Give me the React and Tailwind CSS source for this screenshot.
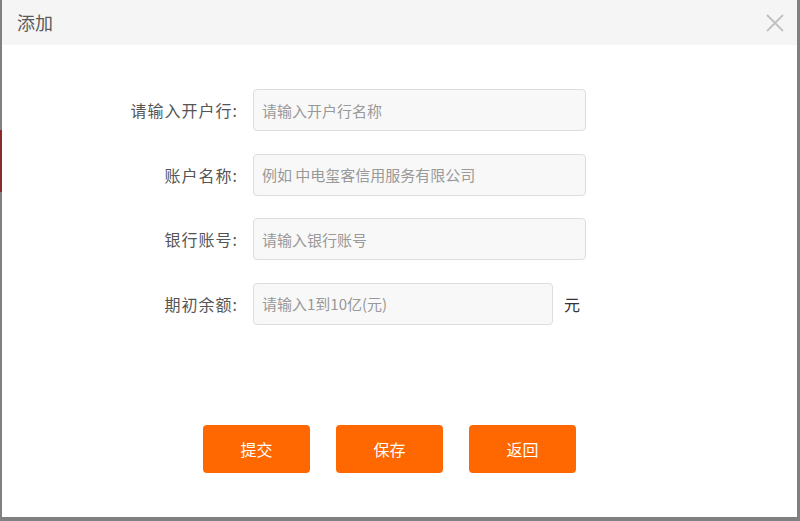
import React from "react";

const fields = [
  { label: "请输入开户行:", placeholder: "请输入开户行名称" },
  { label: "账户名称:", placeholder: "例如 中电玺客信用服务有限公司" },
  { label: "银行账号:", placeholder: "请输入银行账号" },
];

const App = () => {
  return (
    <div
      className="flex h-[521px] w-[800px] flex-col overflow-hidden bg-[#808080]"
      style={{ fontFamily: '"Noto Sans CJK SC", "Liberation Sans", sans-serif' }}
    >
      <div className="flex h-[517px]">
        {/* backdrop edge */}
        <div className="flex w-[2px] flex-col">
          <div className="h-[130px]" />
          <div className="h-[62px] bg-[#8b2a2a]" />
        </div>

        {/* dialog */}
        <div className="flex w-[795px] flex-col bg-white">
          <div className="flex h-[45px] items-center justify-between bg-[#f5f5f5] pl-[15px] pr-[12px]">
            <span className="text-[18px] text-[#5a5a5a]">添加</span>
            <svg width="20" height="20" viewBox="0 0 20 20" className="text-[#c0c0c0]">
              <path d="M2 2 L18 18 M18 2 L2 18" stroke="currentColor" strokeWidth="1.8" />
            </svg>
          </div>

          <div className="flex flex-col gap-[22.5px] pt-[44px]">
            {fields.map((f) => (
              <div key={f.label} className="flex h-[42px] items-center">
                <label className="w-[236px] text-right text-[16px] tracking-[1px] text-[#555]">
                  {f.label}
                </label>
                <input
                  className="ml-[15px] h-[42px] w-[333px] rounded-[4px] border border-[#ddd] bg-[#f8f8f8] px-[8px] text-[15px] text-[#333] placeholder:text-[#999] outline-none"
                  placeholder={f.placeholder}
                />
              </div>
            ))}
            <div className="flex h-[42px] items-center">
              <label className="w-[236px] text-right text-[16px] tracking-[1px] text-[#555]">
                期初余额:
              </label>
              <input
                className="ml-[15px] h-[42px] w-[300px] rounded-[4px] border border-[#ddd] bg-[#f8f8f8] px-[8px] text-[15px] text-[#333] placeholder:text-[#999] outline-none"
                placeholder="请输入1到10亿(元)"
              />
              <span className="ml-[11px] text-[16px] text-[#333]">元</span>
            </div>
          </div>

          <div className="mt-[100px] flex gap-[26px] pl-[201px]">
            {["提交", "保存", "返回"].map((t) => (
              <button
                key={t}
                className="h-[48px] w-[107px] rounded-[4px] bg-[#ff6700] text-[16px] text-white"
              >
                {t}
              </button>
            ))}
          </div>
        </div>

        <div className="w-[3px]" />
      </div>
    </div>
  );
};

export default App;
